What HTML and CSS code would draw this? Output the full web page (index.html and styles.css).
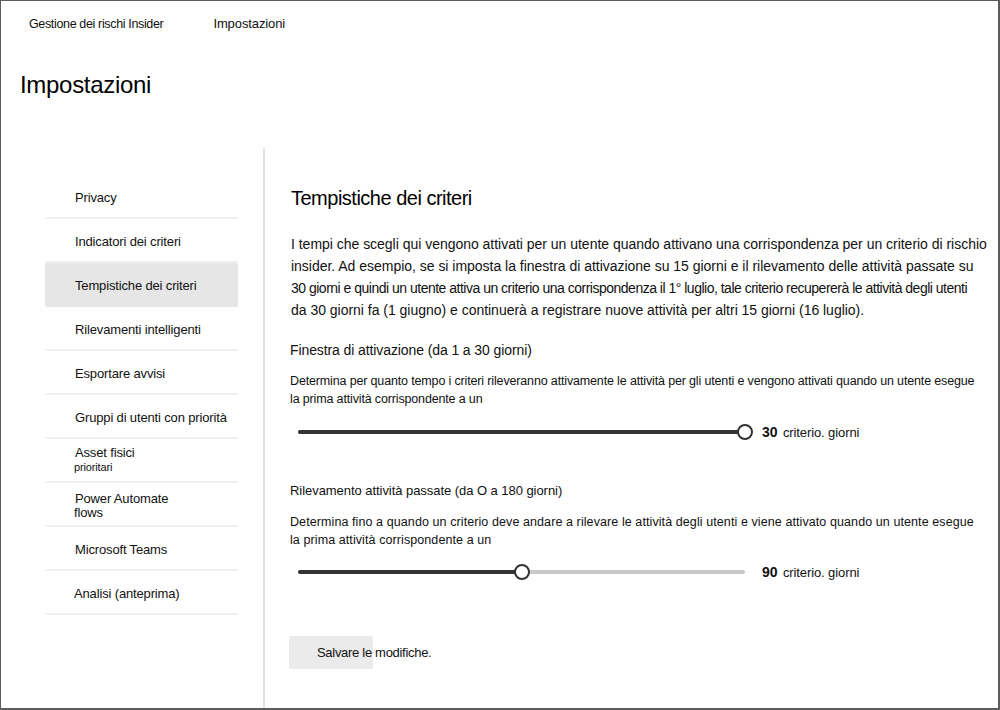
FILE: index.html
```html
<!DOCTYPE html>
<html lang="it">
<head>
<meta charset="utf-8">
<title>Impostazioni</title>
<link rel="stylesheet" href="styles.css">
</head>
<body>
<div class="frame">
  <div class="breadcrumb">
    <span class="crumb crumb-first">Gestione dei rischi Insider</span>
    <span class="crumb crumb-second">Impostazioni</span>
  </div>
  <h1 class="page-title">Impostazioni</h1>
  <div class="layout">
    <nav class="nav">
      <div class="nav-item">Privacy</div>
      <div class="nav-item">Indicatori dei criteri</div>
      <div class="nav-item selected">Tempistiche dei criteri</div>
      <div class="nav-item">Rilevamenti intelligenti</div>
      <div class="nav-item">Esportare avvisi</div>
      <div class="nav-item">Gruppi di utenti con priorità</div>
      <div class="nav-item two-line"><span>Asset fisici</span><span class="small">prioritari</span></div>
      <div class="nav-item two-line tight"><span>Power Automate</span><span class="shift">flows</span></div>
      <div class="nav-item">Microsoft Teams</div>
      <div class="nav-item shift">Analisi (anteprima)</div>
    </nav>
    <main class="main">
      <h2 class="section-title">Tempistiche dei criteri</h2>
      <p class="intro">I tempi che scegli qui vengono attivati per un utente quando attivano una corrispondenza per un criterio di rischio<br>insider. Ad esempio, se si imposta la finestra di attivazione su 15 giorni e il rilevamento delle attività passate su<br><span class="condensed">30 giorni e quindi un utente attiva un criterio una corrispondenza il 1° luglio, tale criterio recupererà le attività degli utenti</span><br>da 30 giorni fa (1 giugno) e continuerà a registrare nuove attività per altri 15 giorni (16 luglio).</p>

      <div class="setting">
        <div class="setting-label">Finestra di attivazione (da 1 a 30 giorni)</div>
        <div class="setting-desc">Determina per quanto tempo i criteri rileveranno attivamente le attività per gli utenti e vengono attivati quando un utente esegue<br>la prima attività corrispondente a un</div>
        <div class="slider">
          <div class="track">
            <div class="fill" style="width:100%"></div>
            <div class="thumb" style="left:100%"></div>
          </div>
          <div class="value"><b>30</b> criterio. giorni</div>
        </div>
      </div>

      <div class="setting second">
        <div class="setting-label">Rilevamento attività passate (da O a 180 giorni)</div>
        <div class="setting-desc">Determina fino a quando un criterio deve andare a rilevare le attività degli utenti e viene attivato quando un utente esegue<br>la prima attività corrispondente a un</div>
        <div class="slider">
          <div class="track">
            <div class="fill" style="width:50%"></div>
            <div class="thumb" style="left:50%"></div>
          </div>
          <div class="value"><b>90</b> criterio. giorni</div>
        </div>
      </div>

      <div class="actions">
        <button class="save-btn"><span>Salvare le modifiche.</span></button>
      </div>
    </main>
  </div>
</div>
</body>
</html>
```
FILE: styles.css
```css
* { box-sizing: border-box; }
html, body { margin: 0; padding: 0; background: #fff; }
body {
  font-family: "Liberation Sans", Arial, sans-serif;
  color: #111;
}
.frame {
  width: 1000px;
  height: 710px;
  border-top: 1px solid #5c5c5c;
  border-left: 1px solid #5c5c5c;
  border-right: 2px solid #5c5c5c;
  border-bottom: 2px solid #5c5c5c;
  overflow: hidden;
  display: flex;
  flex-direction: column;
}
.breadcrumb {
  display: flex;
  height: 45px;
  align-items: center;
  padding-left: 28px;
  font-size: 12.5px;
  color: #111;
}
.crumb-first { letter-spacing: -0.35px; }
.crumb-second { margin-left: 50px; font-size: 13px; letter-spacing: -0.1px; }
.page-title {
  margin: 24px 0 0 19px;
  font-weight: 400;
  font-size: 24px;
  line-height: 30px;
  color: #000;
  letter-spacing: -0.3px;
}
.layout {
  display: flex;
  margin-top: 48px;
  flex: 1;
}
.nav {
  width: 264px;
  padding: 27px 25px 0 44px;
  border-right: 2px solid #e2e2e2;
}
.nav-item {
  height: 44px;
  border-bottom: 2px solid #efefef;
  padding-left: 30px;
  padding-top: 3px;
  display: flex;
  align-items: center;
  font-size: 13px;
  color: #111;
  letter-spacing: -0.15px;
}
.nav-item.selected {
  background: #e6e6e6;
  border-bottom-color: #e6e6e6;
  border-radius: 2px;
}
.nav-item.two-line {
  flex-direction: column;
  align-items: flex-start;
  justify-content: center;
  line-height: 14px;
  padding-top: 0;
  padding-bottom: 0;
}
.nav-item.two-line .small { font-size: 11px; margin-left: -1px; line-height: 14px; }
.nav-item.tight { line-height: 14px; padding-top: 3px; }
.nav-item .shift { margin-left: -1px; }
.nav-item.shift { padding-left: 29px; }
.main {
  flex: 1;
  min-width: 0;
  padding: 38px 0 0 26px;
}
.section-title {
  margin: 0;
  font-weight: 400;
  font-size: 20px;
  line-height: 24px;
  letter-spacing: -0.5px;
  color: #000;
}
.intro {
  margin: 23px 0 0 0;
  font-size: 14px;
  line-height: 22px;
  letter-spacing: -0.02px;
  white-space: nowrap;
  color: #111;
}
.intro .condensed { letter-spacing: -0.5px; }
.setting { margin-top: 19px; }
.setting.second { margin-top: 39px; }
.setting-label {
  font-size: 14px;
  line-height: 20px;
  letter-spacing: -0.1px;
  margin-left: -1px;
}
.setting.second .setting-label { font-size: 13px; letter-spacing: -0.05px; }
.setting-desc {
  margin-top: 12px;
  font-size: 12.5px;
  line-height: 18px;
  letter-spacing: -0.15px;
  margin-left: -1px;
  white-space: nowrap;
}
.setting.second .setting-desc { letter-spacing: 0.09px; }
.slider {
  display: flex;
  align-items: center;
  margin-top: 14px;
  padding-left: 7px;
  height: 20px;
}
.setting.second .slider { margin-top: 13px; }
.track {
  position: relative;
  width: 447px;
  height: 4px;
  background: #c8c8c8;
  border-radius: 2px;
}
.fill {
  height: 100%;
  background: #333;
  border-radius: 2px;
}
.thumb {
  position: absolute;
  top: 50%;
  width: 16px;
  height: 16px;
  margin-left: -8px;
  margin-top: -8px;
  border: 2px solid #333;
  border-radius: 50%;
  background: #fff;
}
.value {
  margin-left: 17px;
  font-size: 13px;
  letter-spacing: -0.1px;
}
.value b { font-weight: 700; font-size: 14px; margin-right: 2px; }
.actions { margin-top: 54px; }
.save-btn {
  width: 84px;
  height: 33px;
  margin-left: -2px;
  padding: 0 0 0 28px;
  border: none;
  border-radius: 2px;
  background: #ebebeb;
  font-family: "Liberation Sans", Arial, sans-serif;
  font-size: 13px;
  letter-spacing: -0.3px;
  color: #111;
  text-align: left;
  white-space: nowrap;
  overflow: visible;
  display: flex;
  align-items: center;
}
```
